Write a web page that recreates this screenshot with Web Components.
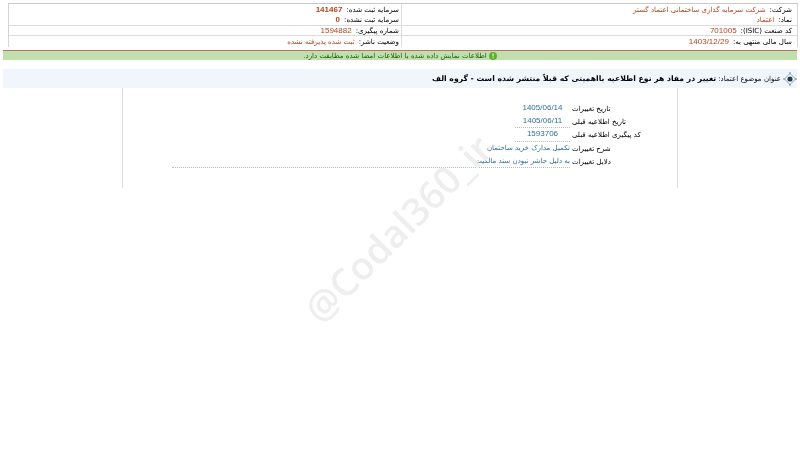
<!doctype html>
<html lang="fa">
<head>
<meta charset="utf-8">
<title>Codal</title>
<style>
  html, body { margin: 0; padding: 0; background: #fff; }
  body { width: 800px; height: 450px; overflow: hidden; font-family: "DejaVu Sans", sans-serif; font-size: 7.05px; }
</style>
</head>
<body>
<codal-page></codal-page>
<script>
class InfoCell extends HTMLElement {
  constructor () {
    super()
    this.attachShadow({ mode: 'open' }).innerHTML = /* html */`
      <style>
        :host { display: flex; gap: 4px; align-items: center; height: 100%; padding: 0 2px 1px 0; box-sizing: border-box; color: #000; white-space: nowrap; overflow: hidden; }
        .value { color: #b5451f; }
        :host([num]) .value { font-family: "Liberation Sans", sans-serif; font-size: 8px; }
        :host([strong]) .value { font-weight: bold; }
      </style>
      <span><slot name="label"></slot></span>
      <span class="value"><slot></slot></span>
    `
  }
}

class InfoTable extends HTMLElement {
  constructor () {
    super()
    this.attachShadow({ mode: 'open' }).innerHTML = /* html */`
      <style>
        :host { display: grid; grid-template-columns: 396px 1fr; grid-template-rows: 11px 11px 10px 11px; margin: 3px 2px 0 8px; border-top: 1px solid #c8c8c8; border-right: 1px solid #d4d4d4; border-left: 1px solid #d4d4d4; direction: rtl; }
        ::slotted(info-cell:nth-child(odd)) { border-left: 1px solid #dcdcdc; padding-right: 5px; }
        ::slotted(info-cell:nth-child(n+3):nth-child(-n+6)) { border-bottom: 1px solid #dcdcdc; }
      </style>
      <slot></slot>
    `
  }
}

class StatusBar extends HTMLElement {
  constructor () {
    super()
    this.attachShadow({ mode: 'open' }).innerHTML = /* html */`
      <style>
        :host { display: flex; justify-content: center; align-items: center; gap: 2px; height: 9px; margin: 3px 3px 0 3px; background: #bfe0ae; border-top: 1px solid #c0705a; color: #1f5c10; direction: rtl; white-space: nowrap; }
        svg { flex: none; }
      </style>
      <svg width="8" height="8" viewBox="0 0 8 8"><circle cx="4" cy="4" r="4" fill="#59b32a"/><rect x="3.5" y="1.5" width="1" height="3" fill="#fff"/><rect x="3.5" y="5.4" width="1" height="1" fill="#fff"/></svg>
      <span><slot></slot></span>
    `
  }
}

class SubjectBar extends HTMLElement {
  constructor () {
    super()
    this.attachShadow({ mode: 'open' }).innerHTML = /* html */`
      <style>
        :host { display: flex; align-items: center; gap: 2px; height: 19px; margin: 9px 3px 0 3px; background: #f0f6fb; color: #111; direction: rtl; white-space: nowrap; }
        svg { flex: none; }
        b { font-size: 7.7px; color: #000; }
      </style>
      <svg width="14" height="14" viewBox="0 0 14 14">
        <path d="M7 1.5 12.5 7 7 12.5 1.5 7Z" fill="#fff" stroke="#8f9dac" stroke-width="1"/>
        <path d="M0 7h2M12 7h2M7 0v2M7 12v2" stroke="#77858f" stroke-width="1"/>
        <circle cx="7" cy="7" r="2.6" fill="#1f3a5c"/>
      </svg>
      <span><slot name="label"></slot></span>
      <b><slot></slot></b>
    `
  }
}

class DetailRow extends HTMLElement {
  constructor () {
    super()
    this.attachShadow({ mode: 'open' }).innerHTML = /* html */`
      <style>
        :host { display: contents; }
        .label { padding-top: 2px; color: #000; white-space: nowrap; text-align: left; direction: rtl; }
        .value { box-sizing: border-box; height: 13px; padding-top: 1px; color: #35709a; white-space: nowrap; direction: rtl; }
        :host([tall]) .value { height: 14px; }
        :host([date]) .value { justify-self: end; width: 55px; text-align: center; font-family: "Liberation Sans", sans-serif; font-size: 8px; }
        :host([line]) .value { border-bottom: 1px dotted #bcbcbc; }
      </style>
      <div class="value"><slot></slot></div>
      <div class="label"><slot name="label"></slot></div>
    `
  }
}

class DetailPanel extends HTMLElement {
  constructor () {
    super()
    this.attachShadow({ mode: 'open' }).innerHTML = /* html */`
      <style>
        :host { display: block; height: 100px; margin: 0 122px; box-sizing: border-box; width: 556px; border-left: 1px solid #dcdcdc; border-right: 1px solid #dcdcdc; padding: 14px 0 0 49px; }
        .grid { display: grid; grid-template-columns: 398px 80px; column-gap: 2px; }
      </style>
      <div class="grid"><slot></slot></div>
    `
  }
}

class WaterMark extends HTMLElement {
  constructor () {
    super()
    this.attachShadow({ mode: 'open' }).innerHTML = /* html */`
      <style>
        :host { position: absolute; left: 397px; top: 228px; transform: translate(-50%, -50%) rotate(-45deg); font: 600 38px "Open Sans", sans-serif; color: #eee; white-space: nowrap; pointer-events: none; }
      </style>
      <slot></slot>
    `
  }
}

class CodalPage extends HTMLElement {
  constructor () {
    super()
    this.attachShadow({ mode: 'open' }).innerHTML = /* html */`
      <style>
        :host { display: block; position: relative; width: 800px; height: 450px; overflow: hidden; filter: blur(.25px); }
      </style>
      <water-mark>@Codal360_ir</water-mark>
      <info-table>
        <info-cell><span slot="label">شرکت:</span>شرکت سرمایه گذاری ساختمانی اعتماد گستر</info-cell>
        <info-cell num strong><span slot="label">سرمایه ثبت شده:</span>141467</info-cell>
        <info-cell><span slot="label">نماد:</span>اعتماد</info-cell>
        <info-cell num strong><span slot="label">سرمایه ثبت نشده:</span>0</info-cell>
        <info-cell num><span slot="label">کد صنعت (ISIC):</span>701005</info-cell>
        <info-cell num><span slot="label">شماره پیگیری:</span>1594882</info-cell>
        <info-cell num><span slot="label">سال مالی منتهی به:</span>1403/12/29</info-cell>
        <info-cell><span slot="label">وضعیت ناشر:</span>ثبت شده پذیرفته نشده</info-cell>
      </info-table>
      <status-bar>اطلاعات نمایش داده شده با اطلاعات امضا شده مطابقت دارد.</status-bar>
      <subject-bar><span slot="label">عنوان موضوع اعتماد:</span>تغییر در مفاد هر نوع اطلاعیه بااهمیتی که قبلاً منتشر شده است - گروه الف</subject-bar>
      <detail-panel>
        <detail-row date><span slot="label">تاریخ تغییرات</span>1405/06/14</detail-row>
        <detail-row date line><span slot="label">تاریخ اطلاعیه قبلی</span>1405/06/11</detail-row>
        <detail-row date line tall><span slot="label">کد پیگیری اطلاعیه قبلی</span>1593706</detail-row>
        <detail-row><span slot="label">شرح تغییرات</span>تکمیل مدارک خرید ساختمان</detail-row>
        <detail-row line><span slot="label">دلایل تغییرات</span>به دلیل حاشر نبودن سند مالکیت</detail-row>
      </detail-panel>
    `
  }
}

customElements.define('info-cell', InfoCell)
customElements.define('info-table', InfoTable)
customElements.define('status-bar', StatusBar)
customElements.define('subject-bar', SubjectBar)
customElements.define('detail-row', DetailRow)
customElements.define('detail-panel', DetailPanel)
customElements.define('water-mark', WaterMark)
customElements.define('codal-page', CodalPage)
</script>
</body>
</html>
